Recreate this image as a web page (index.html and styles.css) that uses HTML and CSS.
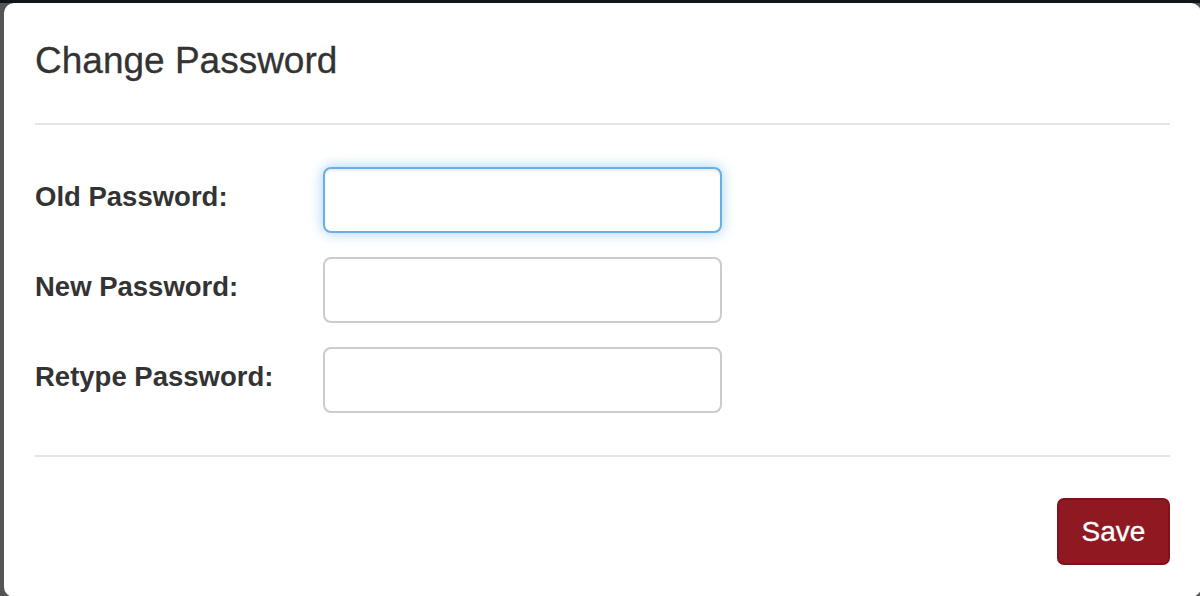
FILE: index.html
```html
<!DOCTYPE html>
<html lang="en">
<head>
  <meta charset="UTF-8" />
  <meta name="viewport" content="width=device-width, initial-scale=1.0"/>
  <title>Change Password</title>
  <link rel="stylesheet" href="styles.css">
</head>
<body>
  <div class="modal">
    <div class="modal-header">
      <h4 class="modal-title">Change Password</h4>
    </div>

    <form class="modal-body">
      <div class="row">
        <label for="old">Old Password:</label>
        <input id="old" type="password" class="focused" />
      </div>
      <div class="row">
        <label for="new">New Password:</label>
        <input id="new" type="password" />
      </div>
      <div class="row">
        <label for="retype">Retype Password:</label>
        <input id="retype" type="password" />
      </div>
    </form>

    <div class="modal-footer">
      <button type="button" class="btn-save">Save</button>
    </div>
  </div>
</body>
</html>
```

FILE: styles.css
```css
html, body { height: 100%; }
body {
  margin: 0;
  font-family: "Liberation Sans", Arial, sans-serif;
  color: #333;
  background: linear-gradient(to bottom, #0f1618 0, #0f1618 3px, #555 3px);
  overflow: hidden;
}
.modal {
  margin: 3px 0 0 4px;
  width: 1197px;
  height: 594px;
  padding: 0 31px;
  background-color: #fff;
  border-radius: 10px;
  box-sizing: border-box;
}
.modal-header {
  padding: 38px 0 42px;
  border-bottom: 2px solid #e5e5e5;
}
.modal-title {
  margin: 0;
  font-size: 37px;
  font-weight: normal;
  line-height: 40px;
  -webkit-text-stroke: 0.3px #333;
}
.modal-body {
  padding: 42px 0;
  display: flex;
  flex-direction: column;
  gap: 24px;
  border-bottom: 2px solid #e5e5e5;
}
.row { display: flex; align-items: center; }
label {
  width: 288px;
  font-size: 27.5px;
  font-weight: bold;
  margin-top: -6px;
}
input {
  width: 399px;
  height: 66px;
  box-sizing: border-box;
  border: 2px solid #ccc;
  border-radius: 8px;
  background-color: #fff;
  padding: 12px 24px;
  font-size: 27px;
  outline: none;
}
input.focused {
  border-color: #66afe9;
  box-shadow: inset 0 2px 2px rgba(0,0,0,.075), 0 0 14px rgba(102,175,233,.6);
}
.modal-footer {
  padding-top: 41px;
  display: flex;
  justify-content: flex-end;
}
.btn-save {
  width: 113px;
  height: 67px;
  border: 2px solid #7e141b;
  border-radius: 7px;
  background-color: #8f1921;
  color: #fff;
  font-family: inherit;
  font-size: 28px;
  padding: 0;
  cursor: pointer;
  -webkit-text-stroke: 0.3px #fff;
}
```
